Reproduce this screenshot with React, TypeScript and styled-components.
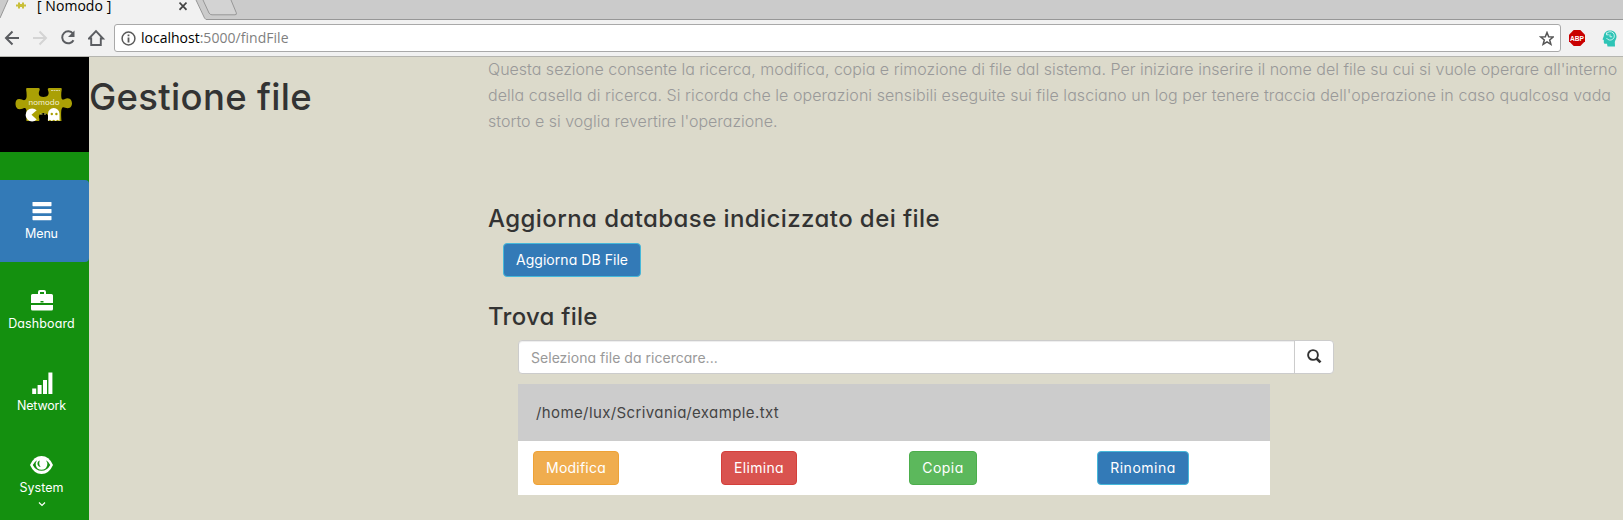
import React from "react";
import styled, { createGlobalStyle } from "styled-components";

const GlobalStyle = createGlobalStyle`
  *, *::before, *::after { box-sizing: border-box; }
  html, body { margin: 0; padding: 0; }
  body {
    width: 1623px;
    height: 520px;
    overflow: hidden;
    background: #dcdacb;
    color: #333;
    font-family: Inter, "Liberation Sans", sans-serif;
    font-feature-settings: "cv11";
  }
  svg { display: block; flex: none; }
`;

const Window = styled.div`
  display: flex;
  flex-direction: column;
  width: 1623px;
  height: 520px;
  overflow: hidden;
`;

/* Browser chrome */

const TabStrip = styled.div`
  position: relative;
  flex: none;
  height: 20px;
  background: #cbcbcb;
  font-family: "Open Sans", "Noto Sans", sans-serif;
`;

const TabShapes = styled.svg`
  position: absolute;
  left: 0;
  top: 0;
`;

const TabContent = styled.div`
  position: relative;
  display: flex;
  align-items: flex-start;
  width: 190px;
  height: 20px;
  padding-left: 16px;
`;

const Favicon = styled.svg`
  margin-top: 2px;
`;

const TabTitle = styled.span`
  margin-left: 11px;
  width: 142px;
  font-size: 14px;
  line-height: 12px;
  letter-spacing: 0.05px;
  color: #000;
  white-space: nowrap;
`;

const CloseIcon = styled.svg`
  margin-top: 1px;
`;

const Toolbar = styled.div`
  display: flex;
  flex: none;
  align-items: center;
  height: 37px;
  padding-left: 4px;
  background: #f1f1f1;
  border-bottom: 1px solid #b5b5b0;
`;

const NavIcons = styled.div`
  display: flex;
  width: 110px;
  gap: 10px;
`;

const AddressBar = styled.div`
  display: flex;
  align-items: center;
  width: 1447px;
  height: 28px;
  padding: 0 6px;
  background: #fff;
  border: 1px solid #a9a9a9;
  border-radius: 3px;
  font-family: "Open Sans", "Noto Sans", sans-serif;
  font-size: 14px;
  white-space: nowrap;
`;

const Url = styled.div`
  flex: 1;
  margin-left: 5px;
  line-height: 20px;
  color: #000;
`;

const UrlPath = styled.span`
  color: #7f7f7f;
  letter-spacing: 0.04px;
`;

const Extensions = styled.div`
  display: flex;
  align-items: center;
  gap: 17px;
  margin-left: 8px;
`;

/* Page */

const Page = styled.div`
  display: flex;
  flex: 1;
  min-height: 0;
`;

const Sidebar = styled.nav`
  display: flex;
  flex-direction: column;
  flex: none;
  width: 89px;
  background: #14900f;
`;

const Brand = styled.div`
  display: flex;
  flex: none;
  height: 95px;
  margin-bottom: 28px;
  padding: 29px 0 0 14px;
  background: #000;
`;

const NavItem = styled.a<{ $active?: boolean }>`
  display: flex;
  flex: none;
  flex-direction: column;
  align-items: center;
  height: 82px;
  margin-bottom: ${(p) => (p.$active ? "8px" : "0")};
  padding: 20px 6px 0 0;
  border-radius: 0 4px 4px 0;
  background: ${(p) => (p.$active ? "#337ab7" : "transparent")};
  color: #fff;
`;

const NavLabel = styled.span<{ $spacing: number }>`
  margin-top: 1px;
  font-size: 12.5px;
  line-height: 21px;
  letter-spacing: ${(p) => p.$spacing}px;
`;

const Content = styled.main`
  display: flex;
  flex: 1;
`;

const TitleColumn = styled.div`
  width: 399px;
  flex: none;
`;

const PageTitle = styled.h1`
  margin: 20px 0 0;
  font-size: 36.5px;
  font-weight: 500;
  line-height: 40px;
  letter-spacing: 0.32px;
`;

const MainColumn = styled.div`
  flex: 1;
`;

const Intro = styled.p`
  margin: -1px 0 0;
  font-size: 16px;
  font-weight: 300;
  line-height: 26px;
  color: #999;
`;

const IntroLine = styled.span<{ $spacing: number }>`
  display: block;
  white-space: nowrap;
  letter-spacing: ${(p) => p.$spacing}px;
`;

const SectionTitle = styled.h3<{ $top: number; $bottom: number; $spacing: number }>`
  margin: ${(p) => p.$top}px 0 ${(p) => p.$bottom}px;
  font-size: 24px;
  font-weight: 500;
  line-height: 26px;
  letter-spacing: ${(p) => p.$spacing}px;
`;

type Tone = "primary" | "warning" | "danger" | "success";

const tones: Record<Tone, [string, string]> = {
  primary: ["#337ab7", "#46b8da"],
  warning: ["#f0ad4e", "#eea236"],
  danger: ["#d9534f", "#d43f3a"],
  success: ["#5cb85c", "#4cae4c"],
};

const Button = styled.button<{ $tone: Tone; $width: number; $spacing: number }>`
  width: ${(p) => p.$width}px;
  height: 34px;
  padding: 0;
  border: 1px solid ${(p) => tones[p.$tone][1]};
  border-radius: 4px;
  background: ${(p) => tones[p.$tone][0]};
  color: #fff;
  font: 400 14px/20px Inter, "Liberation Sans", sans-serif;
  font-feature-settings: "cv11";
  letter-spacing: ${(p) => p.$spacing}px;
  white-space: nowrap;
`;

const UpdateRow = styled.div`
  display: flex;
  padding-left: 15px;
`;

const SearchGroup = styled.div`
  display: flex;
  width: 816px;
  height: 34px;
  margin-left: 30px;
  border: 1px solid #ccc;
  border-radius: 4px;
  background: #fff;
`;

const SearchField = styled.div`
  flex: 1;
  padding-left: 12px;
  border-radius: 4px 0 0 4px;
  box-shadow: inset 0 1px 1px rgba(0, 0, 0, 0.075);
  color: #999;
  font-size: 14px;
  line-height: 33px;
  letter-spacing: 0.03px;
`;

const SearchButton = styled.div`
  width: 39px;
  padding: 8px 0 0 12px;
  border-left: 1px solid #ccc;
`;

const ResultPanel = styled.div`
  width: 752px;
  margin: 10px 0 0 30px;
  background: #fff;
`;

const ResultPath = styled.div`
  height: 57px;
  padding-left: 18px;
  background: #ccc;
  color: #444;
  font-size: 15px;
  line-height: 57px;
  letter-spacing: 0.39px;
`;

const ResultActions = styled.div`
  display: grid;
  grid-template-columns: repeat(4, 188px);
  height: 54px;
  padding: 10px 0 0 15px;
`;

const PuzzleLogo = () => (
  <svg width="60" height="40" viewBox="0 0 60 40">
    <path
      d="M13 2h11.500c1.500 0 1.500 1.500.8 3-1.300 3-.2 6 4.200 6s6-3 4.700-6c-.8-1.800-.4-3 1-3H47c1.500 0 .4 3 .3 5-.2 3 0 6 1 6.500 1.400.6 3-1.300 5.200-1.300 3.400 0 4.500 3 4.500 5s-1 5-4.200 5c-2.300 0-3.500-1.400-5-.9-2.300.8-1.600 9.500-1.300 13.700H34.500c-1 0-.8-1.700-.4-3 .7-2.500-1-5-4.500-5s-5.300 2.500-4.500 5c.4 1.400.6 3-.5 3H12.500c-.5-3 1-11-1-12.700-1.600-1.300-3 .9-6 .9C2.500 23.200 1.500 20 1.500 17.500S2.700 13 5.200 13c2.600 0 4 1.600 5.600 1 2.500-1 1.800-5 1.700-7.500C12.400 4.500 11.600 2 13 2Z"
      fill="#aaa005"
    />
    <text
      x="30"
      y="19.300"
      fill="#f4f2d5"
      fontFamily="Inter, sans-serif"
      fontSize="7"
      textAnchor="middle"
      textLength="31"
      lengthAdjust="spacingAndGlyphs"
    >
      nomodo
    </text>
    <path d="M37 4.500h9" stroke="#d8d59a" strokeWidth="1" strokeDasharray="2 .5" />
    <path d="M22.700 24.300a6.500 6.500 0 1 0 0 9.200l-5.200-4.700Z" fill="#fff" />
    <path d="M26 28h2.500M30 28h2" stroke="#e0dd70" strokeWidth="1.200" />
    <path d="M34 35v-7.200a5.700 5.700 0 0 1 11.500 0V35l-2-1.300-1.800 1.300-2-1.300-1.900 1.300-1.900-1.300Z" fill="#fff" />
    <circle cx="37.800" cy="28" r="1.200" fill="#aaa005" />
    <circle cx="42.400" cy="28" r="1.200" fill="#aaa005" />
  </svg>
);

const MenuIcon = () => (
  <svg width="20" height="22" viewBox="0 0 20 22" fill="currentColor">
    <rect x="0.500" y="2" width="19" height="4.200" rx="0.600" />
    <rect x="0.500" y="9" width="19" height="4.200" rx="0.600" />
    <rect x="0.500" y="16" width="19" height="4.200" rx="0.600" />
  </svg>
);

const BriefcaseIcon = () => (
  <svg width="22" height="22" viewBox="0 0 22 22" fill="currentColor">
    <path
      fillRule="evenodd"
      d="M7 4V2Q7 0 9 0h4q2 0 2 2v2h5.500Q22 4 22 5.500V13H0V5.500Q0 4 1.500 4ZM9 4h4V2H9Zm.5 7v1.500h3V11Z"
    />
    <path d="M0 15h22v4q0 1.500-1.500 1.500h-19Q0 20.500 0 19Z" />
  </svg>
);

const SignalIcon = () => (
  <svg width="22" height="22" viewBox="0 0 22 22" fill="currentColor">
    <path d="M1.200 16.500h4V22h-4ZM6.600 13h4v9h-4ZM12 8h4v14h-4ZM17.400.600h4V22h-4Z" />
  </svg>
);

const EyeIcon = () => (
  <svg width="23" height="22" viewBox="0 0 23 22">
    <path d="M0 11Q4 2 11.500 2T23 11q-4 9-11.500 9T0 11Z" fill="#fff" />
    <path
      d="M7 6.300Q4.200 8 2.800 11q3 5.800 8.700 5.800T20.200 11Q19 8 16 6.300q1.700 2.200 1.200 5-1.100 4.500-5.700 4.500t-5.700-4.500Q5.400 8.500 7 6.300Z"
      fill="#14900f"
    />
    <path d="M9.700 6.600q-3 1.400-2 4.500 1 2 3 2-2.200-2.200-1-6.500Z" fill="#14900f" />
  </svg>
);

export default function App() {
  return (
    <Window>
      <GlobalStyle />
      <TabStrip>
        <TabShapes width="1623" height="20" viewBox="0 0 1623 20">
          <path d="M0 18 8 0h188l9 18.500 1 1.500H0Z" fill="#f1f1f1" />
          <path d="M0 18 8 0M196 0l8.500 18 1.500 1.500h1417" fill="none" stroke="#979797" />
          <path d="M203 0l6 13q1 1.800 3 1.800h23q2 0 1.300-2L231 0" fill="#d3d3d3" stroke="#979797" />
        </TabShapes>
        <TabContent>
          <Favicon width="10" height="7" viewBox="0 0 10 7">
            <path d="M2 .500h2v1.500h2V.500h2v2h2v2H8v2H6V5H4v1.500H2v-2H0v-2h2Z" fill="#c9bf3a" />
          </Favicon>
          <TabTitle>[ Nomodo ]</TabTitle>
          <CloseIcon width="8" height="10" viewBox="0 0 8 10">
            <path d="M.500 1.500 7.500 8.800M7.500 1.500.500 8.800" stroke="#444" strokeWidth="1.700" />
          </CloseIcon>
        </TabContent>
      </TabStrip>

      <Toolbar>
        <NavIcons>
          <svg width="18" height="18" viewBox="0 0 18 18" fill="none" stroke="#5b5d61" strokeWidth="2">
            <path d="M15 9H2.500M8.500 2.500 2 9l6.500 6.500" />
          </svg>
          <svg width="18" height="18" viewBox="0 0 18 18" fill="none" stroke="#d4d4d4" strokeWidth="2">
            <path d="M1 9h12.500M7.500 2.500 14 9l-6.500 6.500" />
          </svg>
          <svg width="18" height="18" viewBox="0 0 18 18" fill="none" stroke="#5b5d61" strokeWidth="2">
            <path d="M13 4.700A6 6 0 1 0 13.500 11.200" />
            <path d="M14.500 1.500V8H8Z" fill="#5b5d61" stroke="none" />
          </svg>
          <svg width="18" height="18" viewBox="0 0 18 18" fill="none" stroke="#5b5d61" strokeWidth="1.900">
            <path d="M1 9.500 8 2.200l7 7.300h-2.200V16H3.200V9.500Z" />
          </svg>
        </NavIcons>
        <AddressBar>
          <svg width="15" height="15" viewBox="0 0 15 15">
            <circle cx="7.500" cy="7.500" r="6.400" fill="none" stroke="#5a5a5a" strokeWidth="1.500" />
            <path d="M7.500 3.500v1.800M7.500 6.500v5" stroke="#5a5a5a" strokeWidth="1.800" />
          </svg>
          <Url>
            localhost<UrlPath>:5000/findFile</UrlPath>
          </Url>
          <svg width="15" height="15" viewBox="0 0 15 15">
            <path
              d="m8 1.500 1.700 4.200 4.500.3-3.500 2.900 1.200 4.400L8 10.800l-3.900 2.500 1.200-4.400L1.800 6l4.500-.3Z"
              fill="none"
              stroke="#555"
              strokeWidth="1.500"
            />
          </svg>
        </AddressBar>
        <Extensions>
          <svg width="16" height="16" viewBox="0 0 16 16">
            <path d="M4.700 0h6.600L16 4.700v6.600L11.300 16H4.700L0 11.300V4.700Z" fill="#c90000" />
            <text
              x="8"
              y="10.700"
              fill="#fff"
              fontFamily="'Liberation Sans', sans-serif"
              fontSize="7.500"
              fontWeight="700"
              textAnchor="middle"
              textLength="14"
              lengthAdjust="spacingAndGlyphs"
            >
              ABP
            </text>
          </svg>
          <svg width="15" height="17" viewBox="0 0 15 17">
            <path
              d="M8 .500c4 0 6.500 2.600 6.500 6.300 0 2.400-1.500 3.600-1.700 5.200L13 16.500H5.500L5 13.700H3q-1.200 0-1.200-1.500V10L.500 9.500 1.800 6C2 2.500 4.500.500 8 .500Z"
              fill="#2ec4b6"
            />
            <path
              d="M4.700 3.500a4.200 4.200 0 1 1-.2 4.500M4.500 2.500v2.300h2.200M8 4.300v2.500h2.200"
              fill="none"
              stroke="#d9f5f2"
              strokeWidth="0.900"
            />
          </svg>
        </Extensions>
      </Toolbar>

      <Page>
        <Sidebar>
          <Brand>
            <PuzzleLogo />
          </Brand>
          <NavItem $active>
            <MenuIcon />
            <NavLabel $spacing={-0.15}>Menu</NavLabel>
          </NavItem>
          <NavItem>
            <BriefcaseIcon />
            <NavLabel $spacing={0.1}>Dashboard</NavLabel>
          </NavItem>
          <NavItem>
            <SignalIcon />
            <NavLabel $spacing={-0.18}>Network</NavLabel>
          </NavItem>
          <NavItem>
            <EyeIcon />
            <NavLabel $spacing={0}>System</NavLabel>
            <svg width="8" height="12" viewBox="0 0 8 12">
              <path d="m1 4.500 3 3 3-3" fill="none" stroke="#fff" strokeWidth="1.200" />
            </svg>
          </NavItem>
        </Sidebar>

        <Content>
          <TitleColumn>
            <PageTitle>Gestione file</PageTitle>
          </TitleColumn>
          <MainColumn>
            <Intro>
              <IntroLine $spacing={0}>
                Questa sezione consente la ricerca, modifica, copia e rimozione di file dal sistema. Per iniziare
                inserire il nome del file su cui si vuole operare all'interno
              </IntroLine>
              <IntroLine $spacing={0.06}>
                della casella di ricerca. Si ricorda che le operazioni sensibili eseguite sui file lasciano un log per
                tenere traccia dell'operazione in caso qualcosa vada
              </IntroLine>
              <IntroLine $spacing={0}>storto e si voglia revertire l'operazione.</IntroLine>
            </Intro>

            <SectionTitle $top={72} $bottom={11} $spacing={0.42}>
              Aggiorna database indicizzato dei file
            </SectionTitle>
            <UpdateRow>
              <Button $tone="primary" $width={138} $spacing={0.05}>
                Aggiorna DB File
              </Button>
            </UpdateRow>

            <SectionTitle $top={27} $bottom={10} $spacing={0.25}>
              Trova file
            </SectionTitle>
            <SearchGroup>
              <SearchField>Seleziona file da ricercare...</SearchField>
              <SearchButton>
                <svg width="15" height="15" viewBox="0 0 15 15" fill="none" stroke="#333">
                  <circle cx="6" cy="6" r="4.900" strokeWidth="1.900" />
                  <path d="m9.500 9.500 4 3.900" strokeWidth="2.600" />
                </svg>
              </SearchButton>
            </SearchGroup>

            <ResultPanel>
              <ResultPath>/home/lux/Scrivania/example.txt</ResultPath>
              <ResultActions>
                <Button $tone="warning" $width={86} $spacing={0.23}>
                  Modifica
                </Button>
                <Button $tone="danger" $width={76} $spacing={0.3}>
                  Elimina
                </Button>
                <Button $tone="success" $width={68} $spacing={0.5}>
                  Copia
                </Button>
                <Button $tone="primary" $width={92} $spacing={0.5}>
                  Rinomina
                </Button>
              </ResultActions>
            </ResultPanel>
          </MainColumn>
        </Content>
      </Page>
    </Window>
  );
}
